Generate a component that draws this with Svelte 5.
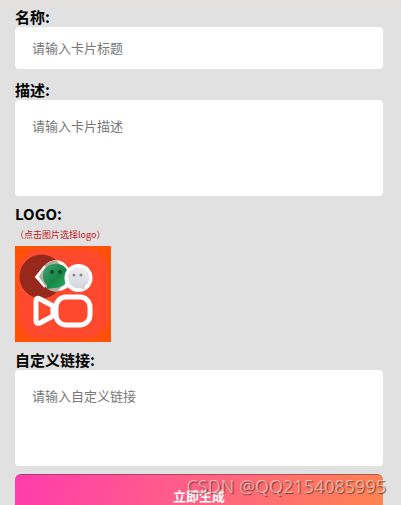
<script lang="ts">
	let title = $state('');
	let desc = $state('');
	let link = $state('');
	let fileInput: HTMLInputElement;

	function handleSubmit(e: SubmitEvent) {
		e.preventDefault();
	}
</script>

<form class="page" onsubmit={handleSubmit}>
	<div class="field field-title">
		<label for="title">名称:</label>
		<input id="title" type="text" placeholder="请输入卡片标题" bind:value={title} />
	</div>

	<div class="field">
		<label for="desc">描述:</label>
		<textarea id="desc" placeholder="请输入卡片描述" bind:value={desc}></textarea>
	</div>

	<div class="field">
		<label for="logo">LOGO:</label>
		<span class="hint">（点击图片选择logo）</span>
		<input id="logo" type="file" accept="image/*" hidden bind:this={fileInput} />
		<button class="logo-btn" type="button" aria-label="选择logo" onclick={() => fileInput.click()}>
			<svg viewBox="0 0 96 96" width="96" height="96" aria-hidden="true">
				<defs>
					<linearGradient id="green" x1="0" y1="0" x2="1" y2="1">
						<stop offset="0" stop-color="#3fa571" />
						<stop offset="0.55" stop-color="#168645" />
						<stop offset="1" stop-color="#2fb568" />
					</linearGradient>
					<linearGradient id="grey" x1="0" y1="0" x2="0" y2="1">
						<stop offset="0" stop-color="#ededf0" />
						<stop offset="1" stop-color="#d2d4d9" />
					</linearGradient>
					<filter id="soft"><feGaussianBlur stdDeviation="2" /></filter>
					<clipPath id="shade"><circle cx="26.5" cy="30.5" r="22" /></clipPath>
				</defs>
				<rect width="96" height="96" fill="#ff5206" />
				<rect x="3" y="3" width="90" height="90" rx="22" fill="#ff4a2e" filter="url(#soft)" />
				<circle cx="26.5" cy="30.5" r="22" fill="#97291c" />

				<!-- green bubble with its ring, greyed where the dark disc covers it -->
				<path id="ring" d="M21 31L29 21C33 13 46 12 51 19L55 24V39C50 46 36 48 30 40Z" fill="#fff" />
				<path d="M24 31L29 21C33 13 46 12 51 19V42C46 47 36 48 30 40Z" fill="#b3aba0" clip-path="url(#shade)" />
				<path d="M30 20L21 31L30 41" fill="none" stroke="#fff" stroke-width="2" />
				<path d="M28 30C28 14 53 14 53 29C53 38 47 42 40 42C38 42 36 42 32 43L32 39C29 36 28 34 28 30Z" fill="url(#green)" />

				<circle cx="63.5" cy="32" r="14" fill="#fff" />
				<path d="M53 31C53 19 74 18 74 31C74 36 72 39 70 40L70 44L65 42C58 43 53 38 53 31Z" fill="url(#grey)" />
				<g fill="#164a2c">
					<circle cx="37" cy="26" r="2" />
					<circle cx="45" cy="26" r="2" />
				</g>
				<g fill="#8b8b88">
					<circle cx="59" cy="29" r="1.5" />
					<circle cx="66" cy="29" r="1.5" />
				</g>

				<g fill="none" stroke="#fff" stroke-width="5" stroke-linejoin="round">
					<rect x="41" y="51" width="34" height="28" rx="10" />
					<path d="M21 55Q21 51 25 53L38 60V70L25 77Q21 78 21 75Z" />
				</g>
			</svg>
		</button>
	</div>

	<div class="field">
		<label for="link">自定义链接:</label>
		<textarea id="link" placeholder="请输入自定义链接" bind:value={link}></textarea>
	</div>

	<div class="submit-row">
		<button class="submit" type="submit">立即生成</button>
		<span class="watermark">CSDN @QQ2154085995</span>
	</div>
</form>

<style>
	:global(body) {
		margin: 0;
		background: #e1e1e2;
		overflow-x: hidden;
	}
	.page {
		padding: 7px 18px 0 15px;
		background: linear-gradient(#e3e0dd, #e1e1e2 12px);
		font-family: "Noto Sans CJK SC", sans-serif;
	}
	.field {
		display: flex;
		flex-direction: column;
		align-items: flex-start;
		margin-bottom: 8px;
	}
	.field-title { margin-bottom: 11px; }
	label {
		font-size: 15px;
		font-weight: 700;
		line-height: 20px;
		color: #000;
	}
	input[type="text"], textarea {
		display: block;
		box-sizing: border-box;
		width: 100%;
		border: none;
		border-radius: 4px;
		outline: none;
		resize: none;
		background: #fff;
		color: #333;
		font-family: inherit;
		font-size: 13px;
		line-height: 20px;
	}
	input[type="text"] { height: 42px; padding: 0 17px 2px; }
	textarea { height: 96px; padding: 16px 17px; }
	input::placeholder, textarea::placeholder { color: #777; opacity: 1; }
	.hint {
		font-size: 9px;
		line-height: 22px;
		color: #c01820;
	}
	.logo-btn {
		padding: 0;
		border: none;
		background: none;
		cursor: pointer;
	}
	.logo-btn svg { display: block; }
	.submit-row { position: relative; }
	.submit {
		display: block;
		width: 100%;
		height: 42px;
		padding: 0;
		border: none;
		border-top: 1px solid rgba(90, 50, 70, 0.5);
		border-radius: 6px;
		background: linear-gradient(100deg, #ff3cac, #ff5e88 45%, #ff8350) border-box;
		color: #fff;
		font-family: inherit;
		font-size: 13px;
		font-weight: 700;
		cursor: pointer;
	}
	.watermark {
		position: absolute;
		top: 0;
		right: -3px;
		font-family: "Open Sans", sans-serif;
		font-size: 18px;
		line-height: 24px;
		color: rgba(255, 225, 215, 0.6);
		text-shadow: 1px 1px 1px rgba(70, 40, 40, 0.7);
		white-space: nowrap;
		pointer-events: none;
	}
</style>
